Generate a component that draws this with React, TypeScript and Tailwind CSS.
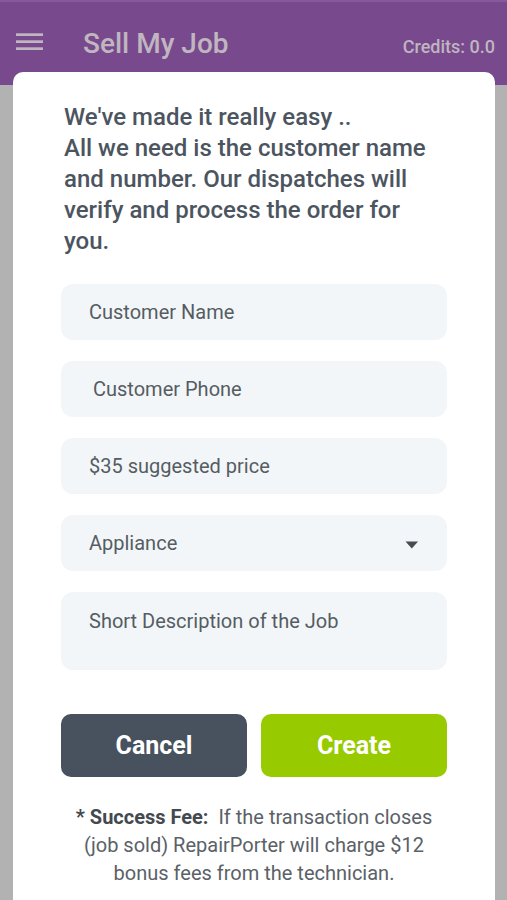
import { useState } from "react";

const fieldClass =
  "block w-full rounded-xl bg-[#f3f6f8] text-[20px] leading-6 text-[#555d63] placeholder:text-[#555d63] placeholder:opacity-100 focus:outline-none focus:ring-2 focus:ring-[#784a8d]";

export default function App() {
  const [name, setName] = useState("");
  const [phone, setPhone] = useState("");
  const [price, setPrice] = useState("");
  const [category, setCategory] = useState("appliance");
  const [description, setDescription] = useState("");

  function handleReset() {
    setName("");
    setPhone("");
    setPrice("");
    setCategory("appliance");
    setDescription("");
  }

  function handleSubmit(e: React.FormEvent) {
    e.preventDefault();
  }

  return (
    <div className="flex min-h-screen flex-col bg-[#b2b2b2] font-['Roboto',sans-serif]">
      <header className="flex h-[85px] items-start justify-between border-t-2 border-[#85599a] bg-[#784a8d] pr-3 pl-4 text-[#bfb6bf]">
        <div className="flex items-start gap-10 pt-6">
          <button type="button" aria-label="Open menu" className="pt-[7px]">
            <svg width="27" height="18" viewBox="0 0 27 18" fill="currentColor">
              <rect x="0" y="0.3" width="27" height="2.7" />
              <rect x="0" y="7.3" width="27" height="2.7" />
              <rect x="0" y="14.3" width="27" height="2.7" />
            </svg>
          </button>
          <h1 className="text-[28px] leading-9 font-medium">Sell My Job</h1>
        </div>
        <p className="pt-[33px] text-[18px] leading-6 font-medium">
          Credits: 0.0
        </p>
      </header>

      <main className="relative mr-3 ml-[13px] -mt-[13px] flex-1 rounded-t-[10px] bg-white px-12 pt-[30px] pb-3">
        <p className="px-[3px] text-[24px] leading-[31px] font-medium text-[#4c555f]">
          We've made it really easy ..
          <br />
          All we need is the customer name and number. Our dispatches will
          verify and process the order for you.
        </p>

        <form onSubmit={handleSubmit} className="mt-[27px]">
          <div className="flex flex-col gap-[21px]">
            <input
              type="text"
              aria-label="Customer Name"
              placeholder="Customer Name"
              value={name}
              onChange={(e) => setName(e.target.value)}
              className={`${fieldClass} h-14 px-7`}
            />
            <input
              type="tel"
              aria-label="Customer Phone"
              placeholder="Customer Phone"
              value={phone}
              onChange={(e) => setPhone(e.target.value)}
              className={`${fieldClass} h-14 px-8`}
            />
            <input
              type="text"
              inputMode="decimal"
              aria-label="Price"
              placeholder="$35 suggested price"
              value={price}
              onChange={(e) => setPrice(e.target.value)}
              className={`${fieldClass} h-14 px-7`}
            />
            <div className="relative">
              <select
                aria-label="Category"
                value={category}
                onChange={(e) => setCategory(e.target.value)}
                className={`${fieldClass} h-14 appearance-none px-7`}
              >
                <option value="appliance">Appliance</option>
              </select>
              <svg
                width="14"
                height="8"
                viewBox="0 0 14 8"
                fill="#454d52"
                className="pointer-events-none absolute top-[26px] right-7"
              >
                <path d="M0.5 0.4h12.6L6.8 7.4z" />
              </svg>
            </div>
            <textarea
              aria-label="Short Description of the Job"
              placeholder="Short Description of the Job"
              value={description}
              onChange={(e) => setDescription(e.target.value)}
              className={`${fieldClass} h-[78px] resize-none px-7 py-[17px]`}
            />
          </div>

          <div className="mt-11 grid grid-cols-2 gap-[14px]">
            <button
              type="button"
              onClick={handleReset}
              className="h-[63px] rounded-[10px] bg-[#47525e] text-[25px] font-bold text-white"
            >
              Cancel
            </button>
            <button
              type="submit"
              className="h-[63px] rounded-[10px] bg-[#97cb00] text-[25px] font-bold text-white"
            >
              Create
            </button>
          </div>
        </form>

        <p className="mt-[26px] text-center text-[20px] leading-7 text-[#5a6167]">
          <strong className="font-bold text-[#43494e]">* Success Fee:</strong>
          &nbsp; If the transaction closes (job sold) RepairPorter will charge
          $12 bonus fees from the technician.
        </p>
      </main>
    </div>
  );
}
